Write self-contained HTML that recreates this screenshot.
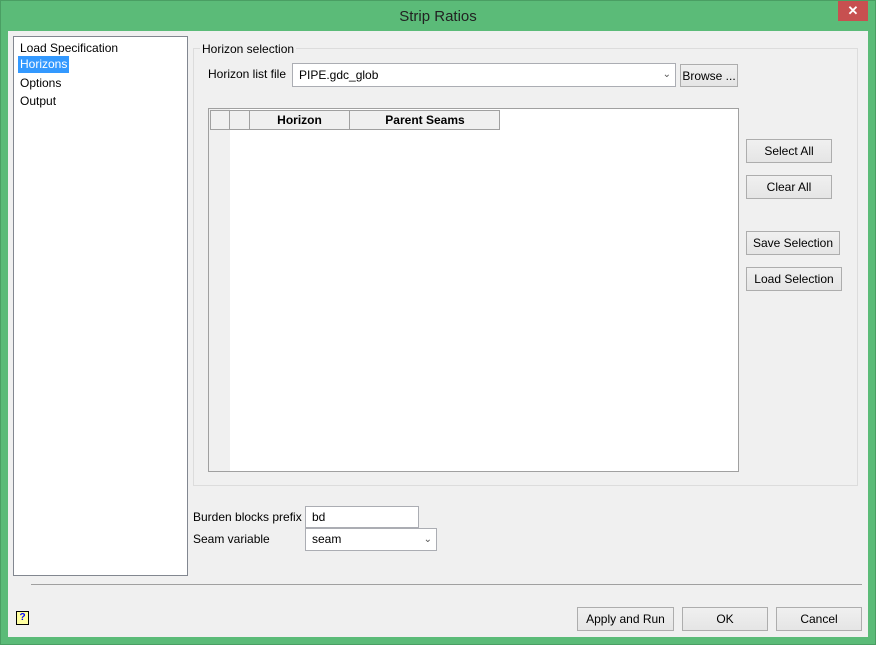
<!DOCTYPE html>
<html><head><style>
*{box-sizing:border-box;margin:0;padding:0}
body{width:876px;height:645px;background:#5bbb78;font-family:"Liberation Sans",sans-serif;font-size:12px;color:#000;position:relative;overflow:hidden}
.a{position:absolute}
.btn{position:absolute;border:1px solid #adadad;background:linear-gradient(#f0f0f0,#e5e5e5);text-align:center;line-height:23px;font-size:12px}
.in{position:absolute;background:#fff;border:1px solid #abadb3;padding-left:6px;line-height:20px}
.chev{position:absolute;right:4px;top:0;color:#555;font-size:10px}
</style></head><body>
<div class="a" style="left:0;top:0;width:876px;height:645px;border:1px solid #4a9e63"></div>
<div class="a" style="left:0;top:8px;width:876px;text-align:center;font-size:15px;color:#222">Strip Ratios</div>
<div class="a" style="left:838px;top:1px;width:30px;height:20px;background:#c75050;color:#fff;text-align:center;font-size:13px;line-height:20px;font-weight:bold">✕</div>
<div class="a" style="left:8px;top:31px;width:860px;height:606px;background:#f0f0f0"></div>
<div class="a" style="left:13px;top:36px;width:175px;height:540px;background:#fff;border:1px solid #828790"></div>
<div class="a" style="left:20px;top:39px;line-height:18px">Load Specification</div>
<div class="a" style="left:18px;top:56px;width:51px;height:17px;background:#3399ff;color:#fff;padding-left:2px;line-height:17px">Horizons</div>
<div class="a" style="left:20px;top:74px;line-height:18px">Options</div>
<div class="a" style="left:20px;top:92px;line-height:18px">Output</div>
<div class="a" style="left:193px;top:48px;width:665px;height:438px;border:1px solid #dcdcdc"></div>
<div class="a" style="left:200px;top:41px;background:#f0f0f0;padding:0 2px;line-height:16px">Horizon selection</div>
<div class="a" style="left:208px;top:67px">Horizon list file</div>
<div class="in" style="left:292px;top:63px;width:384px;height:24px;line-height:22px">PIPE.gdc_glob<span class="chev" style="line-height:22px">&#8964;</span></div>
<div class="btn" style="left:680px;top:64px;width:58px;height:23px;line-height:22px">Browse ...</div>
<div class="a" style="left:208px;top:108px;width:531px;height:364px;background:#fff;border:1px solid #a0a0a0"></div>
<div class="a" style="left:209px;top:109px;width:21px;height:362px;background:#f0f0f0"></div>
<div class="a" style="left:210px;top:110px;width:290px;height:20px;background:#f0f0f0;border:1px solid #a0a0a0"></div>
<div class="a" style="left:229px;top:110px;width:1px;height:20px;background:#a0a0a0"></div>
<div class="a" style="left:249px;top:110px;width:1px;height:20px;background:#a0a0a0"></div>
<div class="a" style="left:349px;top:110px;width:1px;height:20px;background:#a0a0a0"></div>
<div class="a" style="left:250px;top:113px;width:99px;text-align:center;font-weight:bold">Horizon</div>
<div class="a" style="left:350px;top:113px;width:150px;text-align:center;font-weight:bold">Parent Seams</div>
<div class="btn" style="left:746px;top:139px;width:86px;height:24px">Select All</div>
<div class="btn" style="left:746px;top:175px;width:86px;height:24px">Clear All</div>
<div class="btn" style="left:746px;top:231px;width:94px;height:24px">Save Selection</div>
<div class="btn" style="left:746px;top:267px;width:96px;height:24px">Load Selection</div>
<div class="a" style="left:193px;top:510px">Burden blocks prefix</div>
<div class="in" style="left:305px;top:506px;width:114px;height:22px">bd</div>
<div class="a" style="left:193px;top:532px">Seam variable</div>
<div class="in" style="left:305px;top:528px;width:132px;height:23px;line-height:21px">seam<span class="chev" style="line-height:21px">&#8964;</span></div>
<div class="a" style="left:31px;top:584px;width:831px;height:1px;background:#a0a0a0"></div>
<div class="a" style="left:16px;top:611px;width:13px;height:14px;background:#ffffa0;border:1px solid #000;font-size:10px;font-weight:bold;line-height:12px;text-align:center;color:#00f">?</div>
<div class="btn" style="left:577px;top:607px;width:97px;height:24px">Apply and Run</div>
<div class="btn" style="left:682px;top:607px;width:86px;height:24px">OK</div>
<div class="btn" style="left:776px;top:607px;width:86px;height:24px">Cancel</div>
</body></html>
